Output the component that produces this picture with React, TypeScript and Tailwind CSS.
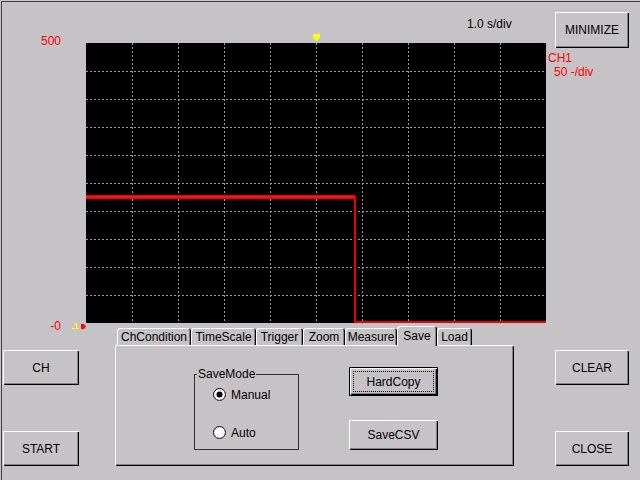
import type { FC, ReactNode } from 'react';

const bevel =
  'shadow-[inset_1px_1px_0_#fff,inset_-1px_-1px_0_#000,inset_-2px_-2px_0_#848284]';

const Btn: FC<{ label: string; className?: string }> = ({ label, className }) => (
  <button
    type="button"
    className={`flex items-center justify-center bg-[#c6c3c6] text-[12px] leading-[12px] text-black ${bevel} ${className ?? ''}`}
  >
    {label}
  </button>
);

const tabs = [
  { name: 'ChCondition', w: 'w-[74px]' },
  { name: 'TimeScale', w: 'w-[65px]' },
  { name: 'Trigger', w: 'w-[47px]' },
  { name: 'Zoom', w: 'w-[42px]' },
  { name: 'Measure', w: 'w-[52px]' },
  { name: 'Save', w: 'w-[40px]', active: true },
  { name: 'Load', w: 'w-[35px]' },
];

const Radio: FC<{ checked?: boolean; children: ReactNode; className?: string }> = ({
  checked,
  children,
  className,
}) => (
  <div className={`flex items-center ${className ?? ''}`}>
    <svg width="13" height="13" viewBox="0 0 13 13" className="block shrink-0">
      <circle cx="6.5" cy="6.5" r="6" fill="#fff" stroke="#000" strokeWidth="1" />
      <path d="M10.74 2.26 A6 6 0 0 1 2.26 10.74" fill="none" stroke="#636163" strokeWidth="1" />
      {checked && <circle cx="6.5" cy="6.5" r="3" fill="#000" />}
    </svg>
    <span className="ml-[5px] text-[12px] leading-[12px]">{children}</span>
  </div>
);

const Plot: FC = () => {
  const vx = [1, 2, 3, 4, 5, 6, 7, 8, 9];
  return (
    <svg width="460" height="280" viewBox="0 0 460 280" className="block bg-black">
      {vx.map((i) => (
        <line
          key={'v' + i}
          x1={46 * i + 0.5}
          x2={46 * i + 0.5}
          y1="0"
          y2="280"
          stroke="#9c9a9c"
          strokeDasharray="2 2"
        />
      ))}
      {vx.map((j) => (
        <line
          key={'h' + j}
          x1="0"
          x2="460"
          y1={28 * j + 0.5}
          y2={28 * j + 0.5}
          stroke="#9c9a9c"
          strokeDasharray="2 2"
        />
      ))}
      <rect x="0" y="152" width="269" height="4" fill="#ee0000" />
      <rect x="0" y="153" width="269" height="2" fill="#ff1010" />
      <rect x="268" y="153" width="2" height="126" fill="#ee0000" />
      <rect x="268" y="278" width="192" height="2" fill="#ee0000" />
    </svg>
  );
};

export default function App() {
  return (
    <div className="flex h-[480px] w-[640px] overflow-hidden bg-[#c6c3c6] font-['Liberation_Sans',Arial,sans-serif] text-[12px] leading-[12px] text-black shadow-[inset_1px_1px_0_#c6c3c6,inset_2px_2px_0_#424142]">
      {/* left column */}
      <div className="flex w-[86px] shrink-0 flex-col">
        <div className="mt-[35px] w-[61px] text-right text-[#ff0000]">500</div>
        <div className="mt-[273px] flex h-[12px] items-center">
          <span className="w-[61px] text-right text-[#ff0000]">-0</span>
          <svg width="8" height="6" viewBox="0 0 8 6" className="ml-[11px] block">
            <path d="M0 5.5 H7 M4.5 0 V5.5 M2 2 L4.5 0" fill="none" stroke="#ffff00" strokeWidth="1.2" />
          </svg>
          <svg width="5" height="5" viewBox="0 0 5 5" className="ml-[1px] block">
            <polygon points="0,0 3,0 5,2.5 3,5 0,5" fill="#ff0000" />
          </svg>
        </div>
        <Btn label="CH" className="ml-[3px] mt-[18px] h-[35px] w-[76px]" />
        <Btn label="START" className="ml-[3px] mt-[46px] h-[35px] w-[76px]" />
      </div>

      {/* middle column */}
      <div className="flex w-[460px] shrink-0 flex-col">
        <div className="flex h-[43px] flex-col">
          <div className="ml-[381px] mt-[18px]">1.0 s/div</div>
          <svg width="7" height="7" viewBox="0 0 7 7" className="ml-[227px] mt-[4px] block">
            <polygon points="0,0 7,0 7,3.5 3.5,7 0,3.5" fill="#ffff00" />
          </svg>
        </div>
        <Plot />

        <div className="ml-[29px] mt-[3px] w-[399px]">
          <div className="relative z-10 -mb-px flex h-[20px] items-start pl-[2px]">
            {tabs.map((t) =>
              t.active ? (
                <div
                  key={t.name}
                  className={`${t.w} flex h-[20px] justify-center rounded-t-[3px] bg-[#c6c3c6] pt-[4px] shadow-[inset_1px_1px_0_#fff,inset_-1px_0_0_#000,inset_-2px_0_0_#848284]`}
                >
                  {t.name}
                </div>
              ) : (
                <div
                  key={t.name}
                  className={`${t.w} mt-[2px] flex h-[17px] items-center justify-center rounded-t-[3px] bg-[#c6c3c6] pt-px shadow-[inset_1px_1px_0_#fff,inset_-1px_0_0_#000,inset_-2px_0_0_#848284]`}
                >
                  {t.name}
                </div>
              ),
            )}
          </div>
          <div className={`flex h-[121px] items-start ${bevel}`}>
            <fieldset className="ml-[79px] mt-[23px] w-[105px] border border-[#313031]">
              <legend className="ml-[2px] px-px">SaveMode</legend>
              <div className="flex flex-col pb-[10px] pl-[18px]">
                <Radio checked className="mt-[8px]">
                  Manual
                </Radio>
                <Radio className="mt-[25px]">Auto</Radio>
              </div>
            </fieldset>
            <div className="ml-[50px] mt-[22px] flex flex-col">
              <button
                type="button"
                className={`flex h-[29px] w-[89px] border border-black bg-[#c6c3c6] p-[3px] ${bevel}`}
              >
                <span className="flex flex-1 items-center justify-center border border-dotted border-black">
                  HardCopy
                </span>
              </button>
              <Btn label="SaveCSV" className="mt-[24px] h-[30px] w-[89px]" />
            </div>
          </div>
        </div>
      </div>

      {/* right column */}
      <div className="flex w-[94px] shrink-0 flex-col">
        <Btn label="MINIMIZE" className="ml-[9px] mt-[12px] h-[36px] w-[74px]" />
        <div className="ml-[2px] mt-[4px] text-[#ff0000]">CH1</div>
        <div className="ml-[8px] mt-[2px] text-[#ff0000]">50 -/div</div>
        <Btn label="CLEAR" className="ml-[9px] mt-[272px] h-[35px] w-[74px]" />
        <Btn label="CLOSE" className="ml-[9px] mt-[46px] h-[35px] w-[74px]" />
      </div>
    </div>
  );
}
